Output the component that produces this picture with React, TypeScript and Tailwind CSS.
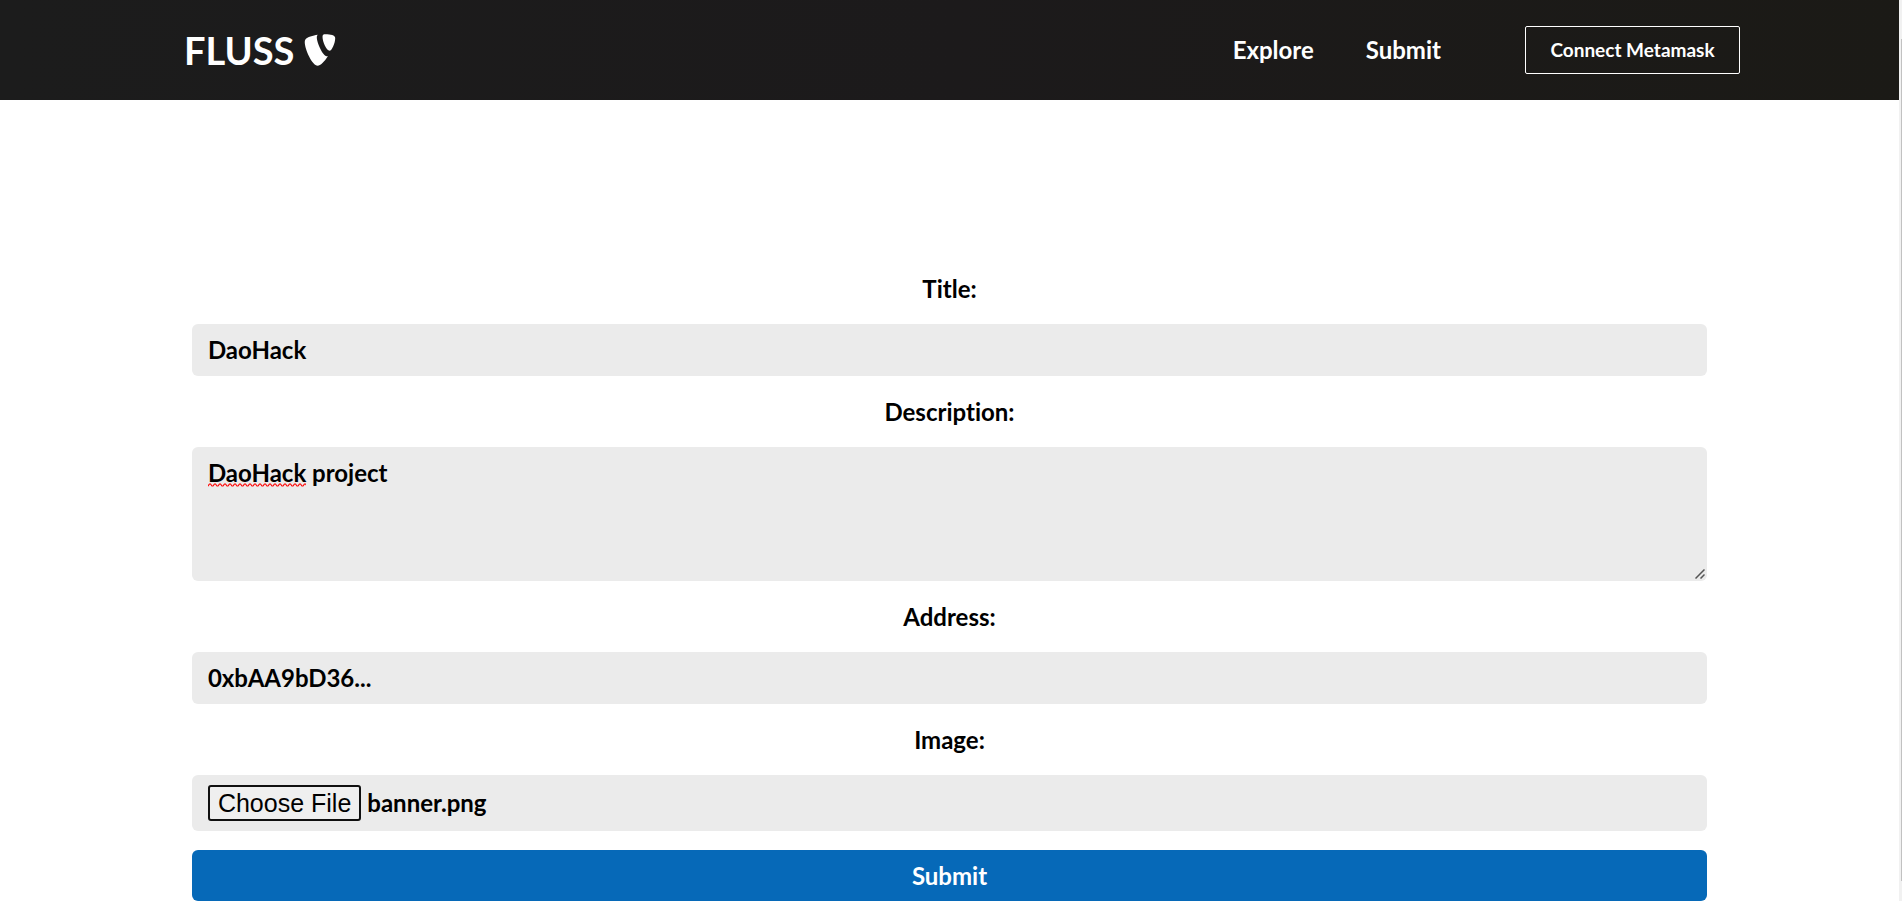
import React, { useEffect, useRef, useState } from "react";
import { FaTypo3 } from "react-icons/fa";

const fieldClass =
  "block w-full rounded-md border-0 bg-[#ebebeb] px-4 text-2xl font-bold text-black outline-none";

const labelClass =
  "flex h-[71px] items-center justify-center text-2xl font-bold text-black";

const Header: React.FC = () => {
  return (
    <header className="h-[100px] bg-linear-to-r from-[#1c1c1c] via-[#1c1a1b] to-[#1b1a16] text-white">
      <div className="flex h-full items-center justify-between pr-[159px] pl-[184px]">
        <a href="#" className="flex items-center gap-2 text-[38px] font-bold">
          FLUSS
          <FaTypo3 className="size-9" />
        </a>

        <div className="flex items-center">
          <nav className="mr-[84px] flex gap-[52px] text-2xl font-bold">
            <a href="#explore">Explore</a>
            <a href="#submit">Submit</a>
          </nav>
          <button
            type="button"
            className="h-12 w-[215px] cursor-pointer rounded-xs border border-white text-[19px] font-bold"
          >
            Connect Metamask
          </button>
        </div>
      </div>
    </header>
  );
};

const App: React.FC = () => {
  const fileRef = useRef<HTMLInputElement>(null);
  const [form, setForm] = useState({
    title: "DaoHack",
    description: "DaoHack project",
    address: "0xbAA9bD36...",
  });

  // Start with the banner already picked
  useEffect(() => {
    const data = new DataTransfer();
    data.items.add(new File([""], "banner.png", { type: "image/png" }));
    if (fileRef.current) fileRef.current.files = data.files;
  }, []);

  const handleChange = (
    e: React.ChangeEvent<HTMLInputElement | HTMLTextAreaElement>
  ) => setForm((prev) => ({ ...prev, [e.target.name]: e.target.value }));

  return (
    <div className="flex bg-white font-['Lato',sans-serif] [font-variant-ligatures:none]">
      <div className="min-w-0 flex-1">
        <Header />

        <main className="mx-auto w-[80%] px-0.5 pt-[153px]">
          <form onSubmit={(e) => e.preventDefault()}>
            <label htmlFor="title" className={labelClass}>
              Title:
            </label>
            <input
              id="title"
              name="title"
              type="text"
              value={form.title}
              onChange={handleChange}
              className={`${fieldClass} h-[52px] pb-0.5`}
            />

            <label htmlFor="description" className={labelClass}>
              Description:
            </label>
            <div className="relative">
              <textarea
                id="description"
                name="description"
                spellCheck={false}
                value={form.description}
                onChange={handleChange}
                className={`${fieldClass} h-[134px] resize-y py-2.5 [&::-webkit-resizer]:bg-transparent`}
              />
              {/* Spelling mark under the first word */}
              <svg
                className="pointer-events-none absolute top-9 left-4 h-1 w-[98px]"
                fill="none"
                stroke="#ff0000"
              >
                <pattern id="wave" width="5" height="4" patternUnits="userSpaceOnUse">
                  <path d="M-1 3 L0 3 L1.5 1 L2.5 1 L4 3 L6 3" strokeWidth="1.2" />
                </pattern>
                <rect width="98" height="4" fill="url(#wave)" stroke="none" />
              </svg>
              {/* Resize grip */}
              <svg
                className="pointer-events-none absolute right-0.5 bottom-0.5 size-2.5"
                viewBox="0 0 10 10"
                fill="none"
                stroke="#555"
                strokeWidth="1.5"
              >
                <path d="M0.5 9.5L9.5 0.5M5.5 9.5L9.5 5.5" />
              </svg>
            </div>

            <label htmlFor="address" className={labelClass}>
              Address:
            </label>
            <input
              id="address"
              name="address"
              type="text"
              value={form.address}
              onChange={handleChange}
              className={`${fieldClass} h-[52px] pb-0.5`}
            />

            <label htmlFor="image" className={labelClass}>
              Image:
            </label>
            <input
              ref={fileRef}
              id="image"
              type="file"
              className={`${fieldClass} h-14 py-2.5 file:mr-1.5 file:h-9 file:rounded-[3px] file:border-2 file:border-solid file:border-[#101010] file:bg-[#efefef] file:px-2 file:font-['Liberation_Sans',sans-serif] file:text-[25px] file:font-normal file:text-black`}
            />

            <button
              type="submit"
              className="mt-[19px] block h-[51px] w-full cursor-pointer rounded-md bg-[#0669b8] text-2xl font-bold text-white"
            >
              Submit
            </button>
          </form>
        </main>
      </div>

      {/* Scroll track */}
      <div className="flex w-[3px] justify-end bg-[#f1f1f1] pt-[39px] pb-5">
        <div className="w-px bg-[#c1c1c1]" />
      </div>
    </div>
  );
};

export default App;
